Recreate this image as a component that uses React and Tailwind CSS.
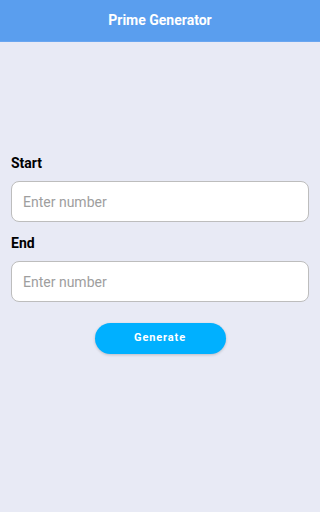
export default function App() {
  return (
    <div className="flex h-[512px] w-[320px] flex-col bg-[#e8eaf5] font-['Roboto',sans-serif]">
      <div className="flex h-[42px] items-center justify-center border-b border-[#6aa6f0] bg-[#5a9eee]">
        <h1 className="text-[14px] font-bold text-white">Prime Generator</h1>
      </div>
      <div className="flex flex-col px-[11px] pt-[113px]">
        <label className="mb-[10px] text-[14px] font-bold leading-[16px] text-black">Start</label>
        <input
          placeholder="Enter number"
          className="h-[41px] w-full rounded-[8px] border-[1.5px] border-[#bdbdbd] bg-white px-[11px] text-[14px] text-gray-800 outline-none placeholder:text-[#9e9e9e]"
        />
        <label className="mb-[10px] mt-[13px] text-[14px] font-bold leading-[16px] text-black">End</label>
        <input
          placeholder="Enter number"
          className="h-[41px] w-full rounded-[8px] border-[1.5px] border-[#bdbdbd] bg-white px-[11px] text-[14px] text-gray-800 outline-none placeholder:text-[#9e9e9e]"
        />
        <div className="mt-[21px] flex justify-center">
          <button className="h-[31px] w-[131px] rounded-full bg-[#00b0ff] text-[11px] font-bold tracking-[0.08em] text-white shadow-[0_1px_3px_rgba(0,0,0,0.2)]">
            Generate
          </button>
        </div>
      </div>
    </div>
  );
}
